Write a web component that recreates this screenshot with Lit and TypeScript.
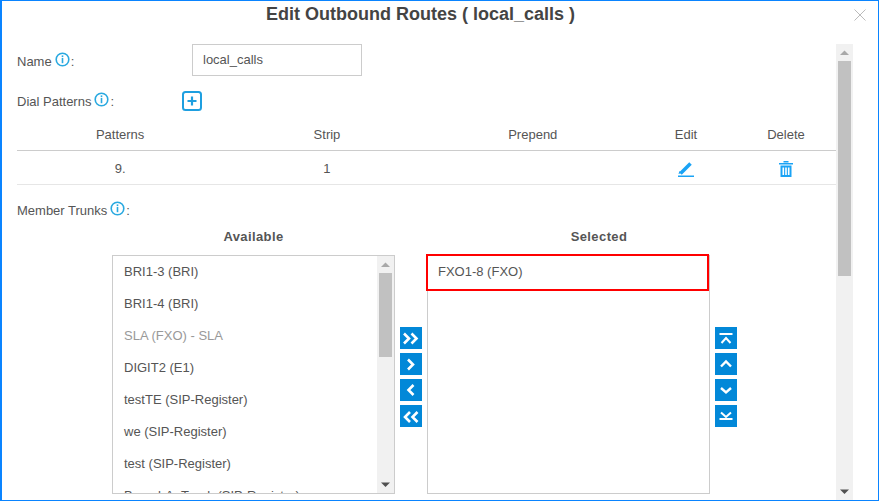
import { LitElement, html, css, svg } from 'lit';
import { customElement } from 'lit/decorators.js';

const available = [
  { name: 'BRI1-3 (BRI)' },
  { name: 'BRI1-4 (BRI)' },
  { name: 'SLA (FXO) - SLA', off: true },
  { name: 'DIGIT2 (E1)' },
  { name: 'testTE (SIP-Register)' },
  { name: 'we (SIP-Register)' },
  { name: 'test (SIP-Register)' },
  { name: 'BranchA_Trunk (SIP-Register)' },
];

const info = html`<svg class="info" width="15" height="15" viewBox="0 0 15 15">
  <circle cx="7.5" cy="7.5" r="6.3" fill="none" stroke="#29a9e0" stroke-width="1.6"></circle>
  <rect x="6.7" y="3.4" width="1.6" height="1.7" fill="#29a9e0"></rect>
  <rect x="6.7" y="6" width="1.6" height="5.2" fill="#29a9e0"></rect>
</svg>`;

// stroke paths for the blue transfer buttons, 22x22 box
const moves = {
  allRight: svg`<path d="M4 6.5l5 5-5 5M11.5 6.5l5 5-5 5" stroke-width="2.6"></path>`,
  right: svg`<path d="M8 6.5l5 5-5 5" stroke-width="2.6"></path>`,
  left: svg`<path d="M13.5 6l-5 5 5 5" stroke-width="2.6"></path>`,
  allLeft: svg`<path d="M10 7l-5 5 5 5M17.5 7l-5 5 5 5" stroke-width="2.6"></path>`,
  top: svg`<path d="M4.5 7h13M6.5 16l4.5-5 4.5 5"></path>`,
  up: svg`<path d="M6 13.5l5-5 5 5" stroke-width="2.4"></path>`,
  down: svg`<path d="M6 9l5 4.5 5-4.5" stroke-width="2.4"></path>`,
  bottom: svg`<path d="M6 7.5l5 4.5 5-4.5M4.5 14h13"></path>`,
};

@customElement('app-root')
export class AppRoot extends LitElement {
  static styles = css`
    :host {
      display: block;
      width: 879px;
      height: 501px;
      font-family: 'Liberation Sans', Arial, sans-serif;
      font-size: 13px;
      color: #555;
    }
    .dialog {
      box-sizing: border-box;
      width: 879px;
      height: 501px;
      border: 1px solid #0a84ff;
      border-left-width: 2px;
      background: #fff;
      display: flex;
      flex-direction: column;
      overflow: hidden;
      position: relative;
    }
    .title {
      height: 43px;
      flex: none;
      box-sizing: border-box;
      padding: 3px 39px 0 0;
      text-align: center;
      font-size: 18px;
      line-height: 21px;
      font-weight: bold;
      color: #444;
    }
    .close {
      position: absolute;
      top: 8px;
      right: 12px;
    }
    .body {
      flex: 1;
      min-height: 0;
      display: flex;
      padding-left: 15px;
      padding-right: 25px;
    }
    .content {
      flex: 1;
      min-width: 0;
      overflow: hidden;
    }
    .vbar {
      flex: none;
      width: 17px;
      background: #f1f1f1;
      display: flex;
      flex-direction: column;
      align-items: center;
      position: relative;
    }
    .vbar .arrow {
      height: 17px;
      flex: none;
      display: flex;
      align-items: center;
      justify-content: center;
    }
    .vbar .thumb {
      width: 13px;
      background: #c1c1c1;
      flex: none;
    }
    .vbar .rest {
      flex: 1;
    }
    .main-thumb {
      height: 215px;
    }
    .field {
      display: flex;
      align-items: center;
    }
    .label {
      display: flex;
      align-items: center;
      line-height: 20px;
      padding-top: 2px;
    }
    .info {
      margin: 0 1px 0 3px;
      position: relative;
      top: -3px;
    }
    .name-label {
      width: 175px;
      padding-top: 4px;
    }
    .dial-label {
      width: 165px;
    }
    .input {
      box-sizing: border-box;
      width: 170px;
      height: 32px;
      border: 1px solid #ccc;
      padding: 0 10px;
      line-height: 30px;
      color: #555;
    }
    .dial {
      margin-top: 15px;
      height: 20px;
    }
    .add {
      display: block;
    }
    table {
      width: 100%;
      margin-top: 7px;
      border-collapse: collapse;
      table-layout: fixed;
    }
    th {
      height: 32px;
      padding: 0;
      font-weight: normal;
      border-bottom: 1px solid #ccc;
    }
    td {
      height: 34px;
      padding: 2px 0 0;
      box-sizing: border-box;
      text-align: center;
      border-bottom: 1px solid #e6e6e6;
    }
    th:nth-child(2),
    td:nth-child(2) {
      padding-left: 1px;
    }
    td svg {
      display: block;
      margin: 0 auto;
    }
    .col-wide {
      width: 206.3px;
    }
    .col-small {
      width: 100px;
    }
    .member {
      margin-top: 15px;
      height: 20px;
    }
    .heads {
      display: flex;
      margin: 7px 0 8px 95px;
      font-weight: bold;
      line-height: 20px;
      letter-spacing: 0.4px;
    }
    .heads div:first-child {
      width: 283px;
      margin-right: 32px;
      text-align: center;
    }
    .heads div:last-child {
      width: 344px;
      text-align: center;
    }
    .transfer {
      display: flex;
      gap: 5px;
      margin-left: 95px;
    }
    .box {
      box-sizing: border-box;
      width: 283px;
      height: 239px;
      flex: none;
      border: 1px solid #ccc;
      display: flex;
      overflow: hidden;
    }
    .list {
      flex: 1;
      min-width: 0;
    }
    .item {
      height: 32px;
      line-height: 32px;
      padding-left: 11px;
      white-space: nowrap;
    }
    .item.off {
      color: #999;
    }
    .box .vbar {
      height: 100%;
      width: 17px;
    }
    .list-thumb {
      height: 84px;
    }
    .selected-box {
      overflow: visible;
    }
    .item.picked {
      box-sizing: border-box;
      height: 37px;
      line-height: 31px;
      margin: -2px 0 0 -2px;
      padding-left: 10px;
      border: 2px solid #f00;
    }
    .moves {
      flex: none;
      display: flex;
      flex-direction: column;
      gap: 4px;
      padding-top: 72px;
    }
    .move {
      width: 22px;
      height: 22px;
      background: #0288d8;
    }
    .move svg {
      display: block;
      fill: none;
      stroke: #fff;
      stroke-width: 2;
    }
  `;

  moveBtn(key: keyof typeof moves) {
    return html`<div class="move">
      <svg width="22" height="22" viewBox="0 0 22 22">${moves[key]}</svg>
    </div>`;
  }

  arrow(up: boolean, color: string) {
    const d = up ? 'M1 6L5.5 1.5 10 6z' : 'M1 1.5L5.5 6 10 1.5z';
    return html`<div class="arrow">
      <svg width="11" height="7" viewBox="0 0 11 7"><path d=${d} fill=${color}></path></svg>
    </div>`;
  }

  render() {
    return html`
      <div class="dialog">
        <div class="title">Edit Outbound Routes ( local_calls )</div>
        <svg class="close" width="12" height="12" viewBox="0 0 12 12">
          <path d="M.5.5l11 11M11.5.5l-11 11" stroke="#bbb" stroke-width="1" fill="none"></path>
        </svg>
        <div class="body">
          <div class="content">
            <div class="field">
              <div class="label name-label">Name${info}:</div>
              <div class="input">local_calls</div>
            </div>
            <div class="field dial">
              <div class="label dial-label">Dial Patterns${info}:</div>
              <svg class="add" width="20" height="20" viewBox="0 0 20 20">
                <rect x="1" y="1" width="18" height="18" rx="2.5" fill="none" stroke="#1e9fe0" stroke-width="2"></rect>
                <path d="M10 5.5v9M5.5 10h9" stroke="#1e9fe0" stroke-width="2.2" fill="none"></path>
              </svg>
            </div>
            <table>
              <colgroup>
                <col class="col-wide" /><col class="col-wide" /><col class="col-wide" />
                <col class="col-small" /><col class="col-small" />
              </colgroup>
              <tr>
                <th>Patterns</th><th>Strip</th><th>Prepend</th><th>Edit</th><th>Delete</th>
              </tr>
              <tr>
                <td>9.</td>
                <td>1</td>
                <td></td>
                <td>
                  <svg width="18" height="16" viewBox="0 0 18 16">
                    <path d="M3.5 12.5L13.5 2.5" stroke="#1aa3f5" stroke-width="3.6" fill="none"></path>
                    <path d="M1.5 13l1-3 2 2z" fill="#1aa3f5"></path>
                    <rect x="1" y="14.5" width="16" height="1.5" fill="#1aa3f5"></rect>
                  </svg>
                </td>
                <td>
                  <svg width="14" height="16" viewBox="0 0 14 16">
                    <path d="M0 2h14V3.5H0zM4.5 0h5v1.5h-5z" fill="#1aa3f5"></path>
                    <path d="M1.5 4.5h11V16h-11zM3.5 6.5v7.5h1.6V6.5zM6.2 6.5v7.5h1.6V6.5zM8.9 6.5v7.5h1.6V6.5z" fill="#1aa3f5" fill-rule="evenodd"></path>
                  </svg>
                </td>
              </tr>
            </table>
            <div class="field member">
              <div class="label">Member Trunks${info}:</div>
            </div>
            <div class="heads"><div>Available</div><div>Selected</div></div>
            <div class="transfer">
              <div class="box">
                <div class="list">
                  ${available.map(
                    (t) => html`<div class="item ${t.off ? 'off' : ''}">${t.name}</div>`
                  )}
                </div>
                <div class="vbar">
                  ${this.arrow(true, '#a8a8a8')}
                  <div class="thumb list-thumb"></div>
                  <div class="rest"></div>
                  ${this.arrow(false, '#505050')}
                </div>
              </div>
              <div class="moves">
                ${this.moveBtn('allRight')}${this.moveBtn('right')}
                ${this.moveBtn('left')}${this.moveBtn('allLeft')}
              </div>
              <div class="box selected-box">
                <div class="list"><div class="item picked">FXO1-8 (FXO)</div></div>
              </div>
              <div class="moves">
                ${this.moveBtn('top')}${this.moveBtn('up')}
                ${this.moveBtn('down')}${this.moveBtn('bottom')}
              </div>
            </div>
          </div>
          <div class="vbar">
            ${this.arrow(true, '#a8a8a8')}
            <div class="thumb main-thumb"></div>
            <div class="rest"></div>
            ${this.arrow(false, '#505050')}
          </div>
        </div>
      </div>
    `;
  }
}
